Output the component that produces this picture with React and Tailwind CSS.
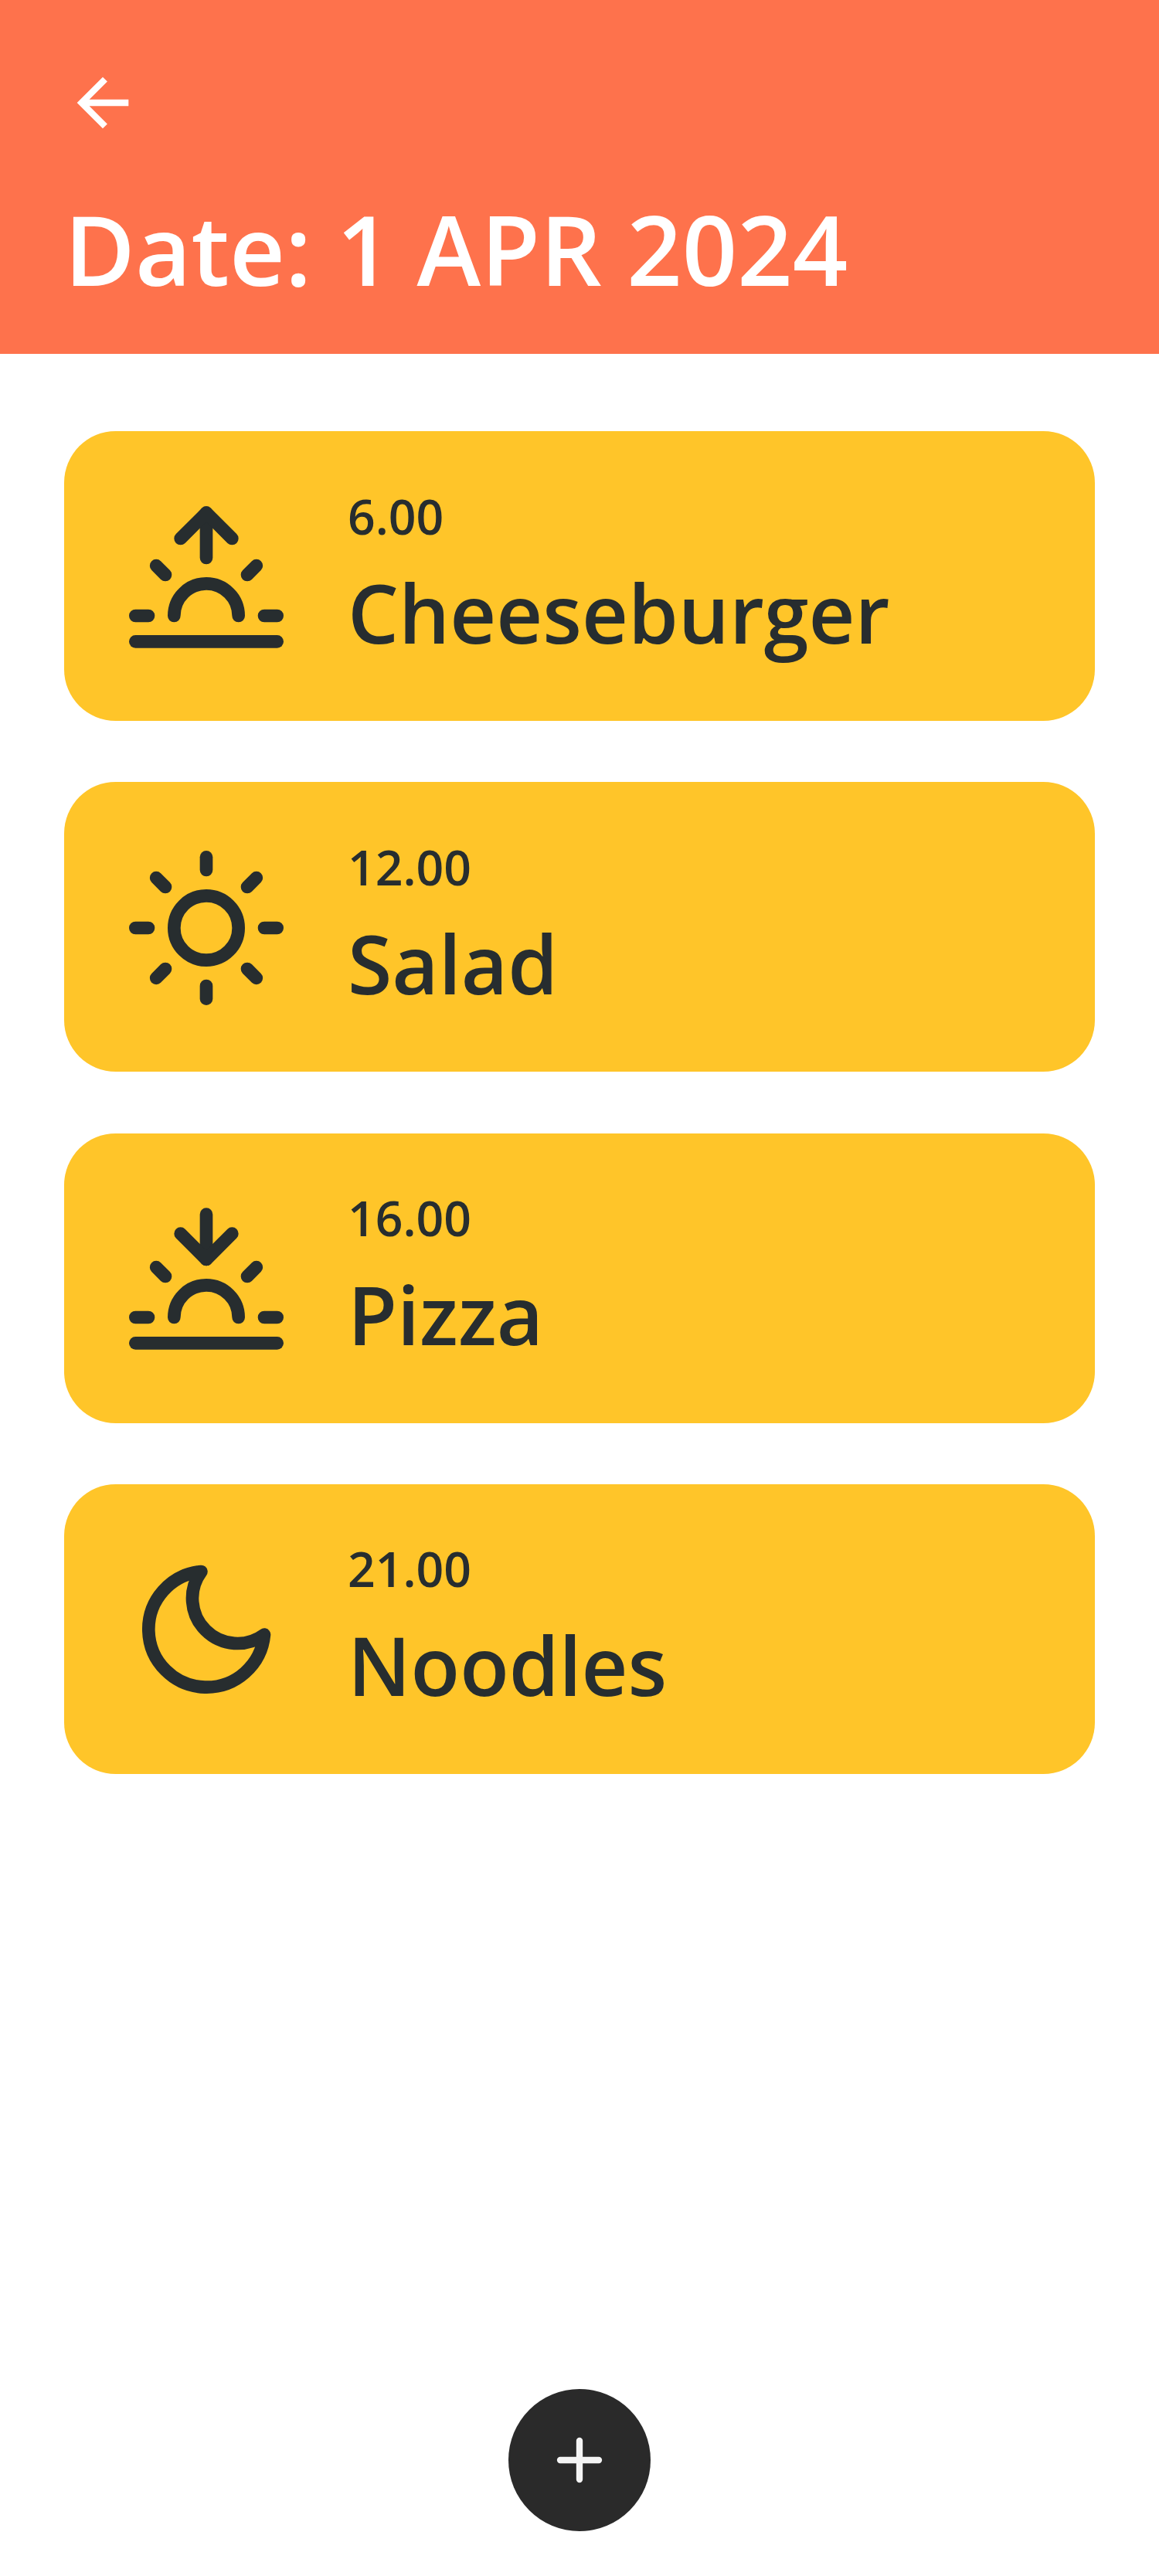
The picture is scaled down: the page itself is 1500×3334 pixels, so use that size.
import { FiMoon, FiSun, FiSunrise, FiSunset } from "react-icons/fi";

const meals = [
  { time: "6.00", name: "Cheeseburger", Icon: FiSunrise },
  { time: "12.00", name: "Salad", Icon: FiSun },
  { time: "16.00", name: "Pizza", Icon: FiSunset },
  { time: "21.00", name: "Noodles", Icon: FiMoon },
];

function BackArrow() {
  return (
    <svg viewBox="0 0 24 24" className="block size-[100px]" fill="currentColor">
      <path d="M20 11H7.83l5.59-5.59L12 4l-8 8 8 8 1.41-1.41L7.83 13H20v-2z" />
    </svg>
  );
}

function MealCard({ time, name, Icon }) {
  return (
    <li className="flex h-[375px] items-start rounded-[66.67px] bg-[#ffc529] pl-[83.33px] text-[#272d2f]">
      <Icon className="mt-[88.5px] size-[200px] shrink-0" />
      <div className="ml-[83.33px] pt-[66.5px] font-semibold">
        <p className="text-[62.5px] leading-[85px]">{time}</p>
        <p className="mt-[12px] text-[104.17px] leading-[142px]">{name}</p>
      </div>
    </li>
  );
}

export default function App() {
  return (
    <div className="flex h-[3334px] w-[1500px] flex-col bg-white font-['Open_Sans',sans-serif]">
      <header className="h-[458.33px] bg-[#fe724c] px-[83.33px] pt-[83.33px] text-white">
        <button aria-label="Back" className="block">
          <BackArrow />
        </button>
        <h1 className="mt-[54px] text-[125px] leading-[170px] font-semibold">Date: 1 APR 2024</h1>
      </header>
      <ul className="mt-[100px] flex flex-col gap-[79.17px] px-[83.33px]">
        {meals.map((meal) => (
          <MealCard key={meal.name} {...meal} />
        ))}
      </ul>
      <button
        aria-label="Add meal"
        className="mx-auto mt-auto mb-[58.5px] flex size-[183.33px] items-center justify-center rounded-full bg-[#2a2a2a] text-[#f4f4f4]"
      >
        <svg viewBox="0 0 24 24" className="size-[100px]" fill="none" stroke="currentColor" strokeWidth="2" strokeLinecap="round">
          <path d="M12 6v12M6 12h12" />
        </svg>
      </button>
    </div>
  );
}
